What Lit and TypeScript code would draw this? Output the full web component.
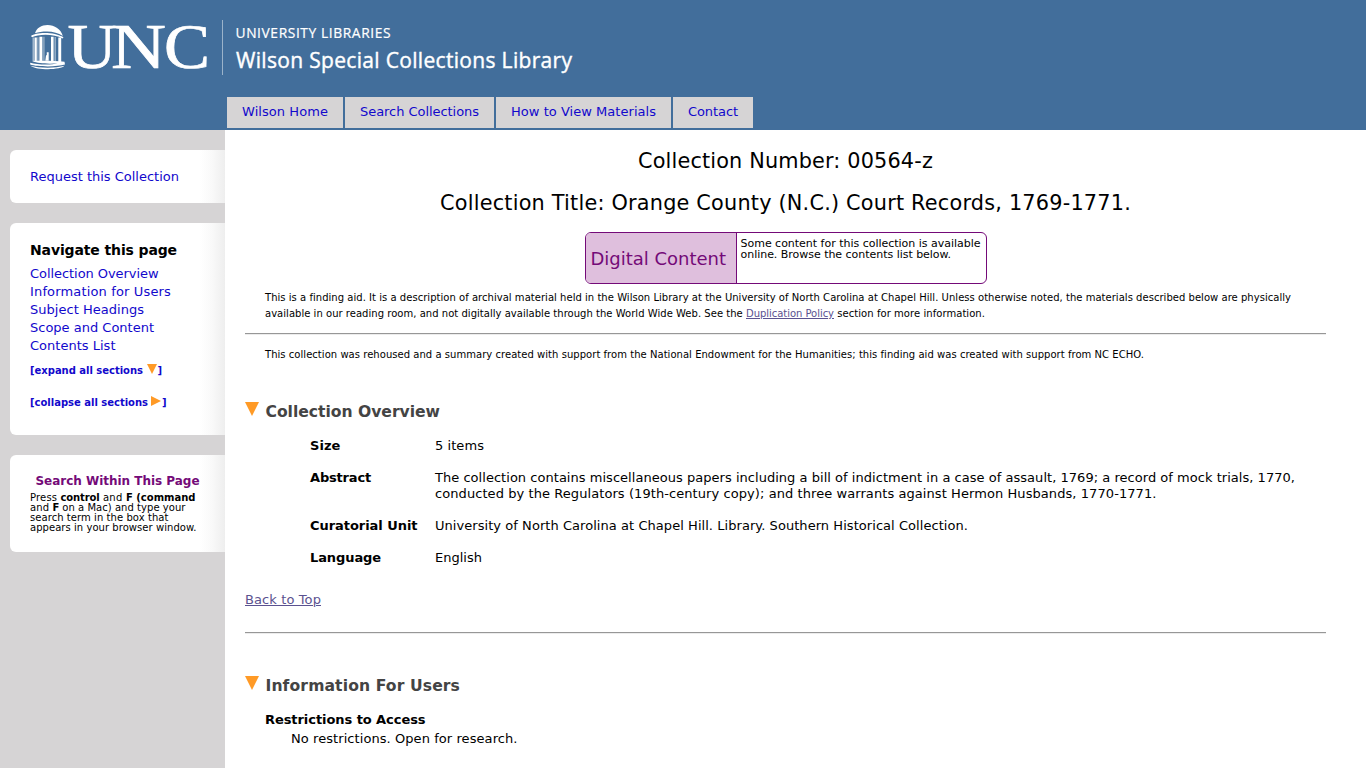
import { LitElement, html, css, svg } from "lit";
import { customElement, property } from "lit/decorators.js";

/** One line of text, tracked so that it fills an exact measure in pixels. */
@customElement("fit-text")
class FitText extends LitElement {
  @property({ type: Number }) width = 0;

  static styles = css`
    :host { display: inline; white-space: pre; }
  `;

  firstUpdated() {
    const count = (this.textContent ?? "").length;
    const natural = this.getBoundingClientRect().width;
    if (count && this.width) {
      this.style.letterSpacing = `${((this.width - natural) / count).toFixed(4)}px`;
    }
  }

  render() {
    return html`<slot></slot>`;
  }
}

const t = (text: string, width: number) => html`<fit-text width=${width}>${text}</fit-text>`;

const tabs: [string, number][] = [
  ["Wilson Home", 86],
  ["Search Collections", 119],
  ["How to View Materials", 145],
  ["Contact", 50],
];

const links: [string, number][] = [
  ["Collection Overview", 128.5],
  ["Information for Users", 141],
  ["Subject Headings", 114],
  ["Scope and Content", 124],
  ["Contents List", 85.5],
];

const facts: [string, number, [string, number][]][] = [
  ["Size", 30.5, [["5 items", 49]]],
  ["Abstract", 61, [
    ["The collection contains miscellaneous papers including a bill of indictment in a case of assault, 1769; a record of mock trials, 1770,", 860],
    ["conducted by the Regulators (19th-century copy); and three warrants against Hermon Husbands, 1770-1771.", 721.5],
  ]],
  ["Curatorial Unit", 107.5, [["University of North Carolina at Chapel Hill. Library. Southern Historical Collection.", 533]]],
  ["Language", 71, [["English", 47]]],
];

const logo = svg`
  <g fill="#fff">
    <path d="M35 33.300C36.500 28 41.500 25 47.500 25C54.500 25 61 29 62.800 36C58.500 32.900 53 31.400 47 31.400C42 31.400 38.500 32 35 33.300Z"/>
    <path d="M31 36C36 31.700 55 31.700 63.500 37.300L62.500 38.500C54.500 33.700 38.500 33.700 32 37.300Z"/>
    <path d="M34.500 37.500h2.300v24.500h-2.300zM39.400 36.800h3v24.700h-3zM51 36.800h2.600v24.700h-2.600zM58.300 37.500h2.900v24.500h-2.900z"/>
    <path d="M32.700 37.500h.9v24h-.9zM37.600 37.200h.7v24.500h-.7zM43.600 36.800h.7v24h-.7zM54.700 37h.8v24.800h-.8z" opacity=".85"/>
    <path d="M45.300 60.800l.7-5.300.8-.4v-2.800h1.900v8.500z"/>
    <path d="M32.500 61C40 60.800 54 60.500 64.500 61.800L65 64.600C57 67 38 67 30.200 64.500V62.800C37 65 52 65.200 57.500 63.300C50 64 38 63.800 32.500 61Z"/>
    <path d="M30.500 65.700C39 68.200 55 68.400 64.500 65.800C61 70 37 70.600 30.500 65.700Z"/>
  </g>
  <g class="wordmark">
    <text x="67.500" y="68.200" textLength="49" lengthAdjust="spacingAndGlyphs">U</text>
    <text x="111" y="68.200" textLength="55" lengthAdjust="spacingAndGlyphs">N</text>
    <text x="164" y="68.200" textLength="46" lengthAdjust="spacingAndGlyphs">C</text>
  </g>
  <path d="M222.500 20v55" stroke="#9bb3ca" stroke-width="1"/>
  <text class="small" x="235.500" y="37.500" textLength="155">UNIVERSITY LIBRARIES</text>
  <text class="large" x="236" y="67.800" textLength="336">Wilson Special Collections Library</text>
`;

const down = html`<svg class="mark" viewBox="0 0 14 14"><path d="M0 0h14L7 14z" /></svg>`;

@customElement("app-root")
class AppRoot extends LitElement {
  static styles = css`
    :host {
      display: flex;
      flex-direction: column;
      height: 100vh;
      overflow: hidden;
      background: #fff;
      color: #000;
      font: 13px/16px "DejaVu Sans", Verdana, sans-serif;
    }
    h1, h2, h3, p, dl, dt, dd, ul { margin: 0; padding: 0; }
    ul { list-style: none; }
    a { color: #1208cc; text-decoration: none; cursor: pointer; }
    .header { flex: none; height: 130px; background: #426e9b; }
    .logo { display: block; width: 600px; height: 97px; }
    .wordmark { font: 63px "Liberation Serif", serif; fill: #fff; stroke: #fff; stroke-width: 0.7; }
    .small { font: 13.800px "Open Sans", sans-serif; fill: #fff; stroke: #fff; stroke-width: 0.2; }
    .large { font: 21px "Open Sans", sans-serif; fill: #fff; stroke: #fff; stroke-width: 0.4; }
    .tabs { display: flex; gap: 2px; margin-left: 227px; }
    .tab { height: 31px; line-height: 29px; padding: 0 15px; background: #d6d4d5; box-sizing: border-box; white-space: nowrap; }
    .body { flex: 1; display: flex; min-height: 0; }
    .side { flex: none; width: 225px; box-sizing: border-box; padding: 20px 0 0 10px; background: #d6d4d5; display: flex; flex-direction: column; gap: 20px; }
    .card { box-sizing: border-box; padding-left: 20px; border-radius: 6px 0 0 6px; background: linear-gradient(to right, #fff 190px, #f9f9f9 202px, #eeeeee 215px); white-space: nowrap; }
    .request { height: 53px; padding-top: 17px; line-height: 19px; }
    .navigate { height: 212px; padding-top: 18px; }
    .navigate h3 { font-size: 14px; line-height: 18px; margin-bottom: 6px; }
    .links { line-height: 18px; }
    .toggle { display: flex; align-items: center; font-weight: bold; font-size: 10px; line-height: 16px; margin-top: 8px; }
    .toggle + .toggle { margin-top: 16px; }
    .toggle svg { width: 10px; height: 10px; margin: -4px 0.500px 0 4px; fill: #ff9a26; }
    .toggle .right { margin: -4px 1px 0 3px; }
    .search { height: 97px; padding-top: 17px; font-size: 10px; line-height: 10px; }
    .search h3 { font-size: 12px; line-height: 18px; color: #740a78; padding-left: 5.500px; margin-bottom: 3px; }
    .main { flex: 1; min-width: 0; padding: 17px 40px 0 20px; }
    .title { font-size: 20.800px; font-weight: normal; line-height: 28px; text-align: center; margin-bottom: 14px; }
    .digital { box-sizing: border-box; width: 402px; height: 52px; margin: 15px auto 0; border: 1px solid #740a78; border-radius: 6px; display: flex; overflow: hidden; }
    .label { box-sizing: border-box; width: 151px; padding-left: 5px; font-size: 18px; line-height: 51px; color: #740a78; background: #dfbfdd; border-right: 1px solid #740a78; white-space: nowrap; }
    .note { padding: 5px 0 0 4px; font-size: 11px; line-height: 11px; white-space: nowrap; }
    .fine { font-size: 10px; line-height: 16px; margin: 6px 0 0 20px; white-space: nowrap; }
    .visited { color: #5b5290; text-decoration: underline; }
    .rule { height: 1px; background: #979797; border-bottom: 1px solid #ececec; margin-top: 11px; }
    .rule + .fine { margin-top: 12px; }
    .section { display: flex; gap: 6.500px; margin-top: 39px; font-size: 15.600px; line-height: 20px; color: #444; }
    .mark { width: 14px; height: 14px; fill: #ff9a26; }
    .facts { display: grid; grid-template-columns: 125px 1fr; row-gap: 16px; margin: 16px 0 0 65px; white-space: nowrap; }
    .facts dt { font-weight: bold; }
    .top { margin-top: 26px; }
    .top + .rule { margin-top: 24px; }
    .rule + .section { margin-top: 42px; }
    .sub { font-size: 13px; line-height: 16px; margin: 16px 0 3px 20px; }
    .text { margin-left: 46px; }
  `;

  render() {
    return html`
      <header class="header">
        <svg class="logo" viewBox="0 0 600 97">${logo}</svg>
        <nav class="tabs">${tabs.map(([s, w]) => html`<a class="tab">${t(s, w)}</a>`)}</nav>
      </header>
      <div class="body">
        <aside class="side">
          <div class="card request"><a>${t("Request this Collection", 149)}</a></div>
          <div class="card navigate">
            <h3>${t("Navigate this page", 147)}</h3>
            <ul class="links">${links.map(([s, w]) => html`<li><a>${t(s, w)}</a></li>`)}</ul>
            <a class="toggle">${t("[expand all sections", 113)}<svg viewBox="0 0 10 10"><path d="M0 0h10L5 10z" /></svg>${t("]", 5)}</a>
            <a class="toggle">${t("[collapse all sections", 118)}<svg class="right" viewBox="0 0 10 10"><path d="M0 0v10L10 5z" /></svg>${t("]", 5)}</a>
          </div>
          <div class="card search">
            <h3>${t("Search Within This Page", 164)}</h3>
            <p>${t("Press ", 30.5)}<b>${t("control", 39)}</b>${t(" and ", 26.5)}<b>${t("F (command", 69.5)}</b></p>
            <p>${t("and ", 22.5)}<b>${t("F", 6.5)}</b>${t(" on a Mac) and type your", 126.5)}</p>
            <p>${t("search term in the box that", 138.5)}</p>
            <p>${t("appears in your browser window.", 166.5)}</p>
          </div>
        </aside>
        <main class="main">
          <h1 class="title">${t("Collection Number: 00564-z", 295)}</h1>
          <h1 class="title">${t("Collection Title: Orange County (N.C.) Court Records, 1769-1771.", 691)}</h1>
          <div class="digital">
            <div class="label">${t("Digital Content", 135.5)}</div>
            <div class="note">
              <div>${t("Some content for this collection is available", 240)}</div>
              <div>${t("online. Browse the contents list below.", 210.5)}</div>
            </div>
          </div>
          <p class="fine">
            ${t("This is a finding aid. It is a description of archival material held in the Wilson Library at the University of North Carolina at Chapel Hill. Unless otherwise noted, the materials described below are physically", 1026)}<br />
            ${t("available in our reading room, and not digitally available through the World Wide Web. See the ", 481)}<a class="visited">${t("Duplication Policy", 88)}</a>${t(" section for more information.", 151)}
          </p>
          <div class="rule"></div>
          <p class="fine">${t("This collection was rehoused and a summary created with support from the National Endowment for the Humanities; this finding aid was created with support from NC ECHO.", 879)}</p>
          <h2 class="section">${down}${t("Collection Overview", 174.5)}</h2>
          <dl class="facts">
            ${facts.map(([name, w, lines]) => html`
              <dt>${t(name, w)}</dt>
              <dd>${lines.map(([s, lw]) => html`<div>${t(s, lw)}</div>`)}</dd>`)}
          </dl>
          <p class="top"><a class="visited">${t("Back to Top", 76)}</a></p>
          <div class="rule"></div>
          <h2 class="section">${down}${t("Information For Users", 194.5)}</h2>
          <h3 class="sub">${t("Restrictions to Access", 160.5)}</h3>
          <p class="text">${t("No restrictions. Open for research.", 226.5)}</p>
        </main>
      </div>
    `;
  }
}
